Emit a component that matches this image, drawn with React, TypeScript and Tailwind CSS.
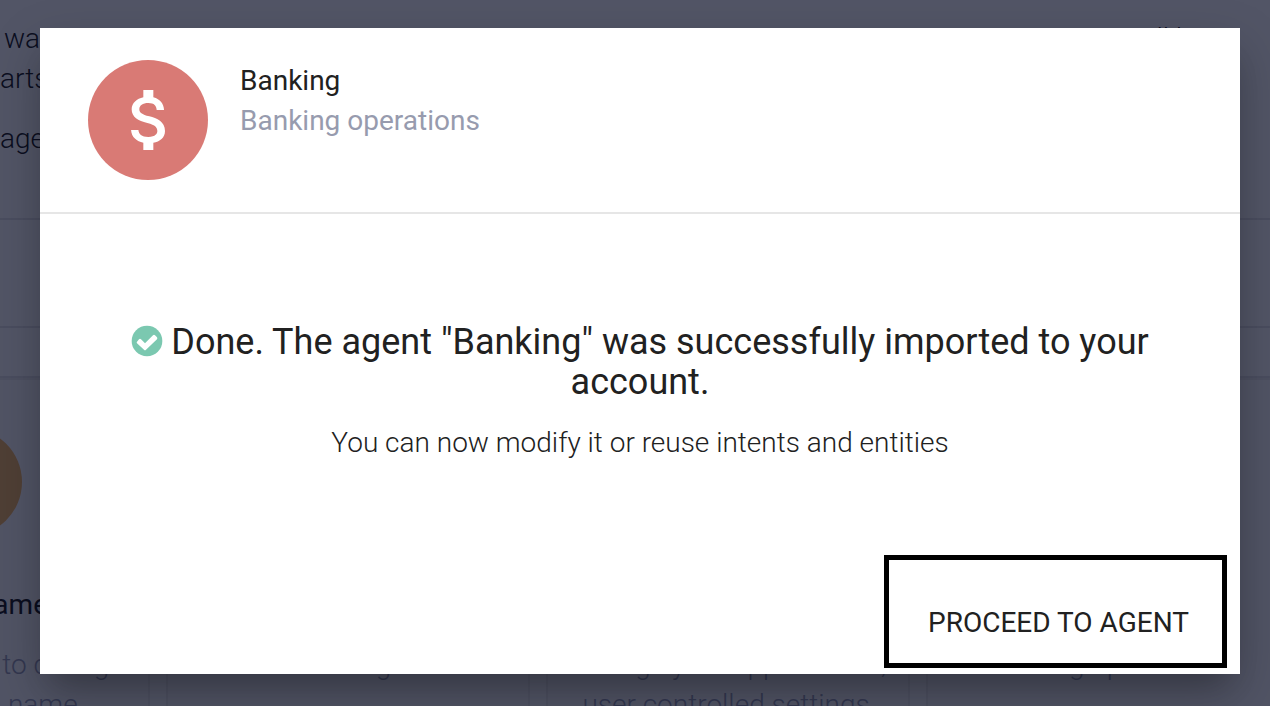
import type { ReactNode } from "react";
import { MdAttachMoney } from "react-icons/md";

function AgentCard({ title, children }: { title?: string; children: ReactNode }) {
  return (
    <article className="flex h-[400px] flex-col items-center border-2 border-[#ebebee] bg-[#fafafc] pt-12 text-center">
      {title && <div className="size-[108px] shrink-0 rounded-full bg-[#f5af4f]" />}
      <h3 className="mt-[49px] h-10 text-[28px] leading-10 font-normal text-black">{title}</h3>
      <p className="mt-5 pr-1 font-light text-[#8f94ae]">{children}</p>
    </article>
  );
}

function AgentGallery() {
  return (
    <main
      aria-hidden="true"
      className="h-full overflow-hidden bg-white text-[28px] leading-10 font-light text-black"
    >
      <section className="flex h-[218px] flex-col pt-[19px]">
        <div className="flex justify-between pr-16 pl-1">
          <span>wa</span>
          <span>will be</span>
        </div>
        <p>arts</p>
        <p className="mt-5">age</p>
      </section>
      <div className="h-[108px] border-t-2 border-[#e0e0e4]" />
      <div className="h-[50px] border-t-2 border-[#e0e0e4]" />
      <section className="-ml-[214px] grid w-[1504px] grid-cols-4 gap-4 border-t-2 border-[#e0e0e4]">
        <AgentCard title="Device name">
          Allows the user to change
          <br />
          any device's name
        </AgentCard>
        <AgentCard>
          <span className="mt-[108px] block">Exchange</span>
        </AgentCard>
        <AgentCard>
          <span className="mt-[108px] block">
            Manage your applications,
            <br />
            user controlled settings
          </span>
        </AgentCard>
        <AgentCard>
          <span className="mt-[108px] block">Setting up alarms</span>
        </AgentCard>
      </section>
    </main>
  );
}

function DoneIcon() {
  return (
    <svg
      viewBox="0 0 96 96"
      className="mr-2 inline-block size-8 align-[-3px]"
      fill="none"
      aria-hidden="true"
    >
      <circle cx="48" cy="48" r="46" fill="#7bc8b0" />
      <path
        d="M18 50 L24 43 Q27 40 30 43 L42 55 L66 31 Q69 28 72 31 L78 37 Q80 40 78 43 L45 74 Q42 77 39 74 L18 55 Q16 52 18 50 Z"
        fill="#fff"
      />
    </svg>
  );
}

function ImportDialog() {
  return (
    <section
      role="dialog"
      aria-modal="true"
      aria-labelledby="dialog-title"
      className="flex min-h-[646px] w-full flex-col bg-white text-[#212121] shadow-[0_22px_30px_-14px_rgba(0,0,0,0.2),0_20px_48px_0_rgba(0,0,0,0.22)]"
    >
      <header className="flex items-center gap-8 border-b-2 border-[#e6e6e6] px-12 py-8">
        <div className="flex size-[120px] shrink-0 items-center justify-center rounded-full bg-[#d97a75] text-white">
          <MdAttachMoney viewBox="-0.6 0 24 24" className="size-20" />
        </div>
        <div className="pb-[38px] text-[28px] leading-10">
          <h1 id="dialog-title">Banking</h1>
          <p className="text-[#979bae]">Banking operations</p>
        </div>
      </header>
      <div className="flex-1 px-20 pt-[108px] text-center">
        <h2 className="text-[36px] leading-10">
          <DoneIcon />
          Done. The agent "Banking" was successfully imported to your account.
        </h2>
        <p className="mt-[21px] text-[28px] leading-10 font-light">
          You can now modify it or reuse intents and entities
        </p>
      </div>
      <footer className="flex justify-end pr-[13px] pb-[6px]">
        <button
          type="button"
          className="h-[113px] w-[343px] border-5 border-black pt-[22px] pl-[6px] text-[28px] leading-10"
        >
          PROCEED TO AGENT
        </button>
      </footer>
    </section>
  );
}

export default function App() {
  return (
    <div className="relative h-screen overflow-hidden font-['Roboto',sans-serif]">
      <AgentGallery />
      <div className="absolute inset-0 bg-[rgba(15,20,43,0.72)] px-[30px] pt-7 pl-10">
        <ImportDialog />
      </div>
    </div>
  );
}
